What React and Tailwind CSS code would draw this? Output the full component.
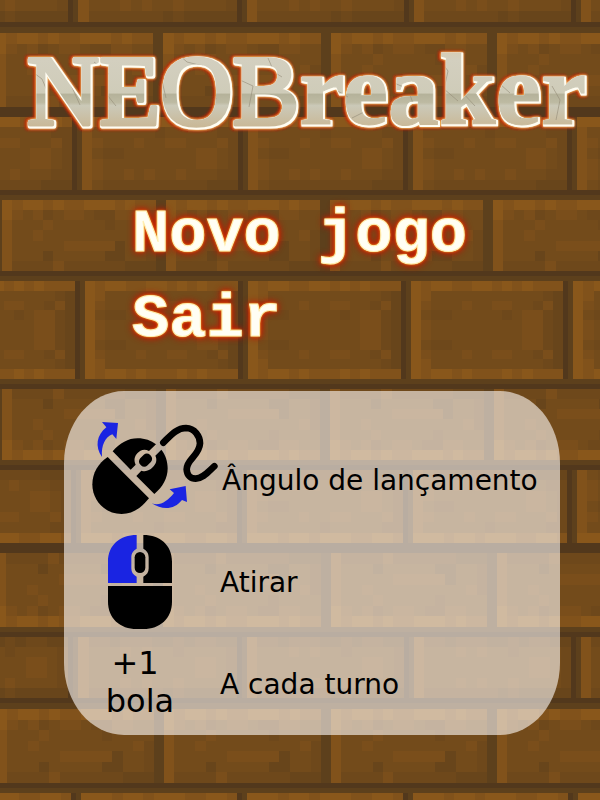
import React from "react";

// Shades of the brick texture, from deepest shadow (0) to highlight (6).
const SHADES = ["#5e3f1b", "#68451b", "#6e481b", "#734b1b", "#7a4e1b", "#81521b", "#89571b"];

const LONG = [
  "656656556665655",
  "643423443224433",
  "533343333323333",
  "533433333333342",
  "533333444441332",
  "533313333311332",
  "522224222222111",
];
const SMOOTH = [
  "666566566655665",
  "533333323333322",
  "543334334433342",
  "532233333334432",
  "543333333334432",
  "543343433433322",
  "532222222222111",
];
const SHORT = [
  "522122211212211",
  "533343433233332",
  "533333333334432",
  "533333333334432",
  "533343433433332",
  "522222221211111",
];
const TALL = [
  "656655665656555",
  "653333333333321",
  "643334334433241",
  "632233333234421",
  "643333333334421",
  "643333333334421",
  "632233333334421",
  "643334334433241",
  "653333333333321",
  "656656555656555",
];
const flip = (rows) => [...rows].reverse();

// One entry per course of bricks: top, bottom, left edges of the bricks, texture.
const COURSES = [
  [0, 22, [-90, 78, 247, 414, 581], SHORT.slice(4)],
  [33, 107, [-4, 163, 331, 497], LONG],
  [117, 190, [-84, 82, 248, 413, 577], SMOOTH],
  [200, 271, [2, 166, 330, 493], LONG],
  [281, 379, [-78, 85, 248, 411, 573], TALL],
  [389, 460, [2, 166, 330, 494], flip(LONG)],
  [470, 543, [-84, 81, 247, 413, 577], flip(SMOOTH)],
  [553, 627, [-4, 163, 331, 497], flip(LONG)],
  [637, 698, [-90, 78, 247, 414, 581], SHORT],
  [709, 783, [-3, 164, 331, 497], LONG],
  [793, 800, [-84, 81, 247, 413, 578], [SMOOTH[0]]],
];

// Mortar beds: top, colour of the upper half, colour of the lower half.
const DARK = "#52381c";
const SOFT = "#5d401c";
const BEDS = [
  [22, DARK, SOFT],
  [107, DARK, DARK],
  [190, DARK, SOFT],
  [271, DARK, SOFT],
  [379, SOFT, DARK],
  [460, SOFT, DARK],
  [543, DARK, DARK],
  [627, SOFT, DARK],
  [698, DARK, SOFT],
  [783, DARK, SOFT],
];

function Brick({ x, width, top, bottom, rows }) {
  const h = (bottom - top) / rows.length;
  const w = width / 15;
  return rows.map((row, r) =>
    [...row].map((shade, c) => (
      <rect
        key={`${r}-${c}`}
        x={x + c * w}
        y={top + r * h}
        width={w}
        height={h}
        fill={SHADES[Number(shade)]}
      />
    ))
  );
}

function Wall() {
  return (
    <svg
      className="absolute inset-0 -z-10 h-full w-full"
      viewBox="0 0 600 800"
      preserveAspectRatio="xMidYMid slice"
      shapeRendering="crispEdges"
      aria-hidden="true"
    >
      <rect width="600" height="800" fill={SOFT} />
      {BEDS.map(([y, upper, lower]) => (
        <g key={y}>
          <rect y={y} width="600" height="6" fill={upper} />
          <rect y={y + 5} width="600" height="5" fill={lower} />
        </g>
      ))}
      {COURSES.map(([top, bottom, edges, rows], i) =>
        edges.map((x, j) => {
          const width = (edges[j + 1] ?? x + 167) - x - 10;
          return (
            <g key={`${i}-${j}`}>
              {i % 2 === 0 && <rect x={x - 10} y={top} width="5" height={bottom - top} fill={DARK} />}
              <Brick x={x} width={width} top={top} bottom={bottom} rows={rows} />
            </g>
          );
        })
      )}
    </svg>
  );
}

function Logo() {
  return (
    <svg className="block w-full" viewBox="0 0 600 192">
      <defs>
        <linearGradient id="stone" gradientUnits="userSpaceOnUse" x1="0" y1="48" x2="0" y2="128">
          <stop offset="0" stopColor="#d9cbb0" />
          <stop offset="0.15" stopColor="#d3cfbf" />
          <stop offset="0.56" stopColor="#cfccb9" />
          <stop offset="0.58" stopColor="#b5b29a" />
          <stop offset="0.68" stopColor="#bdbaa2" />
          <stop offset="0.72" stopColor="#cbc9b8" />
          <stop offset="1" stopColor="#c9b795" />
        </linearGradient>
        <pattern id="marble" width="600" height="192" patternUnits="userSpaceOnUse">
          <rect width="600" height="192" fill="url(#stone)" />
          <path
            d="M30 70l12 9 6 14 14 5M66 60l8 12-3 13 9 20M94 62l14 11-4 18 12 15M150 84l12-3 4 17M178 54l9 8 16 4M206 90l10 8-4 14M232 62l8 18 13 6-4 21M268 58l6 14 8 5M262 98l13 9M296 84l9 14-3 18M336 90l12 7M352 118l16-8M392 82l16 7 7 20M440 60l8 11-4 18 14 12M462 92l13 14M500 84l10 9M520 118l12-6M552 86l8 14-4 20"
            fill="none"
            stroke="#938b76"
            strokeWidth="1"
            opacity="0.6"
          />
        </pattern>
        <filter id="engrave" filterUnits="userSpaceOnUse" x="0" y="0" width="600" height="192">
          <feMorphology in="SourceAlpha" operator="dilate" radius="2" result="wide" />
          <feOffset in="wide" dx="0" dy="1" result="low" />
          <feGaussianBlur in="low" stdDeviation="1.6" result="halo" />
          <feFlood floodColor="#c92c00" />
          <feComposite in2="halo" operator="in" result="red" />
          <feMorphology in="SourceAlpha" operator="dilate" radius="1" result="near" />
          <feOffset in="near" dx="1" dy="1" result="nearLow" />
          <feGaussianBlur in="nearLow" stdDeviation="1" result="rim" />
          <feFlood floodColor="#ffd76a" />
          <feComposite in2="rim" operator="in" result="gold" />
          <feFlood floodColor="#fffdf2" />
          <feComposite in2="nearLow" operator="in" result="white" />
          <feMerge>
            <feMergeNode in="red" />
            <feMergeNode in="red" />
            <feMergeNode in="gold" />
            <feMergeNode in="white" />
            <feMergeNode in="SourceGraphic" />
          </feMerge>
        </filter>
      </defs>
      <text
        x="27"
        y="124"
        className="font-['Liberation_Serif',serif] text-[102px]"
        fill="url(#marble)"
        stroke="url(#marble)"
        strokeLinejoin="round"
        filter="url(#engrave)"
      >
        <tspan strokeWidth="4" className="text-[100px]">NEOB</tspan>
        <tspan strokeWidth="1" className="font-bold">reaker</tspan>
      </text>
    </svg>
  );
}

function MenuButton({ children }) {
  return (
    <button
      type="button"
      className="cursor-pointer whitespace-nowrap text-left font-['Liberation_Mono',monospace] text-[62px] leading-[85px] font-bold text-[#fffef4] [-webkit-text-stroke:1px_#ffeeb0] [text-shadow:0_0_2px_#f0c040,0_0_3px_#e8a020,0_0_5px_#d42000,0_0_7px_#c81400,0_0_9px_#c81400]"
    >
      {children}
    </button>
  );
}

function AimIcon() {
  return (
    <svg className="h-[94px] w-[130px] shrink-0" viewBox="96 123 390 282" aria-hidden="true">
      <path d="M143 231L267 355C243 385 217 402 185 402C135 402 97 362 97 313C97 279 115 250 143 231Z" />
      <path d="M158 214C180 189 204 175 233 175C255 175 273 182 288 193L267 213C252 205 240 211 232 220C223 230 221 241 227 254L212 269Z" />
      <path d="M304 209C317 225 323 245 323 265C323 295 308 322 283 342L229 288L244 272C258 276 268 272 278 262C289 251 292 239 286 227Z" />
      <rect x="242" y="220" width="30" height="41" rx="13" transform="rotate(45 257 240)" />
      <path
        d="M310 188C332 166 350 144 378 144C404 145 420 168 420 190C418 228 380 236 380 268C381 287 393 296 407 296C430 295 445 275 463 259"
        fill="none"
        stroke="black"
        strokeWidth="20"
        strokeLinecap="round"
      />
      <g fill="#1a24e2">
        <path d="M126 231C104 200 110 165 139 142L126 126L174 129L169 177L157 163C136 172 123 195 126 231Z" />
        <path d="M275 370C300 379 322 364 342 339L329 328L377 318L381 366L366 360C344 388 309 392 275 370Z" />
      </g>
    </svg>
  );
}

function ClickIcon() {
  return (
    <svg className="h-[94px] w-[66px]" viewBox="141 45 198 282" aria-hidden="true">
      <path
        fill="#1a24e2"
        d="M230 45C180 45 144 75 144 125V189H230V170C219 164 214 157 214 145V112C214 99 220 92 230 86Z"
      />
      <path d="M250 45C300 45 336 75 336 125V189H250V170C261 164 266 157 266 145V112C266 99 260 92 250 86Z" />
      <rect x="224" y="96" width="32" height="63" rx="16" />
      <path d="M144 198H336V245C336 295 300 327 250 327H230C180 327 144 295 144 245Z" />
    </svg>
  );
}

export default function App() {
  return (
    <main className="relative isolate min-h-screen overflow-hidden pb-16 text-black">
      <Wall />
      <h1>
        <Logo />
      </h1>
      <nav className="flex flex-col items-start pl-[132px]">
        <MenuButton>Novo jogo</MenuButton>
        <MenuButton>Sair</MenuButton>
      </nav>
      <section className="mt-[29px] mr-10 ml-16 rounded-[60px/72px] bg-[#fffcfa]/60 pt-[30px] pl-7 font-['DejaVu_Sans',sans-serif] text-[28px] leading-8">
        <div className="flex h-[110px] items-start">
          <AimIcon />
          <p className="mt-11 whitespace-nowrap">Ângulo de lançamento</p>
        </div>
        <div className="flex h-[102px] items-center gap-8">
          <div className="flex w-24 justify-center">
            <ClickIcon />
          </div>
          <p className="pt-0.5">Atirar</p>
        </div>
        <div className="flex h-[102px] items-center gap-8">
          <p className="w-24 pb-1 text-center text-[32px] leading-[38px]">
            <span className="block pr-2.5">+1</span>
            bola
          </p>
          <p className="pt-0.5">A cada turno</p>
        </div>
      </section>
    </main>
  );
}
